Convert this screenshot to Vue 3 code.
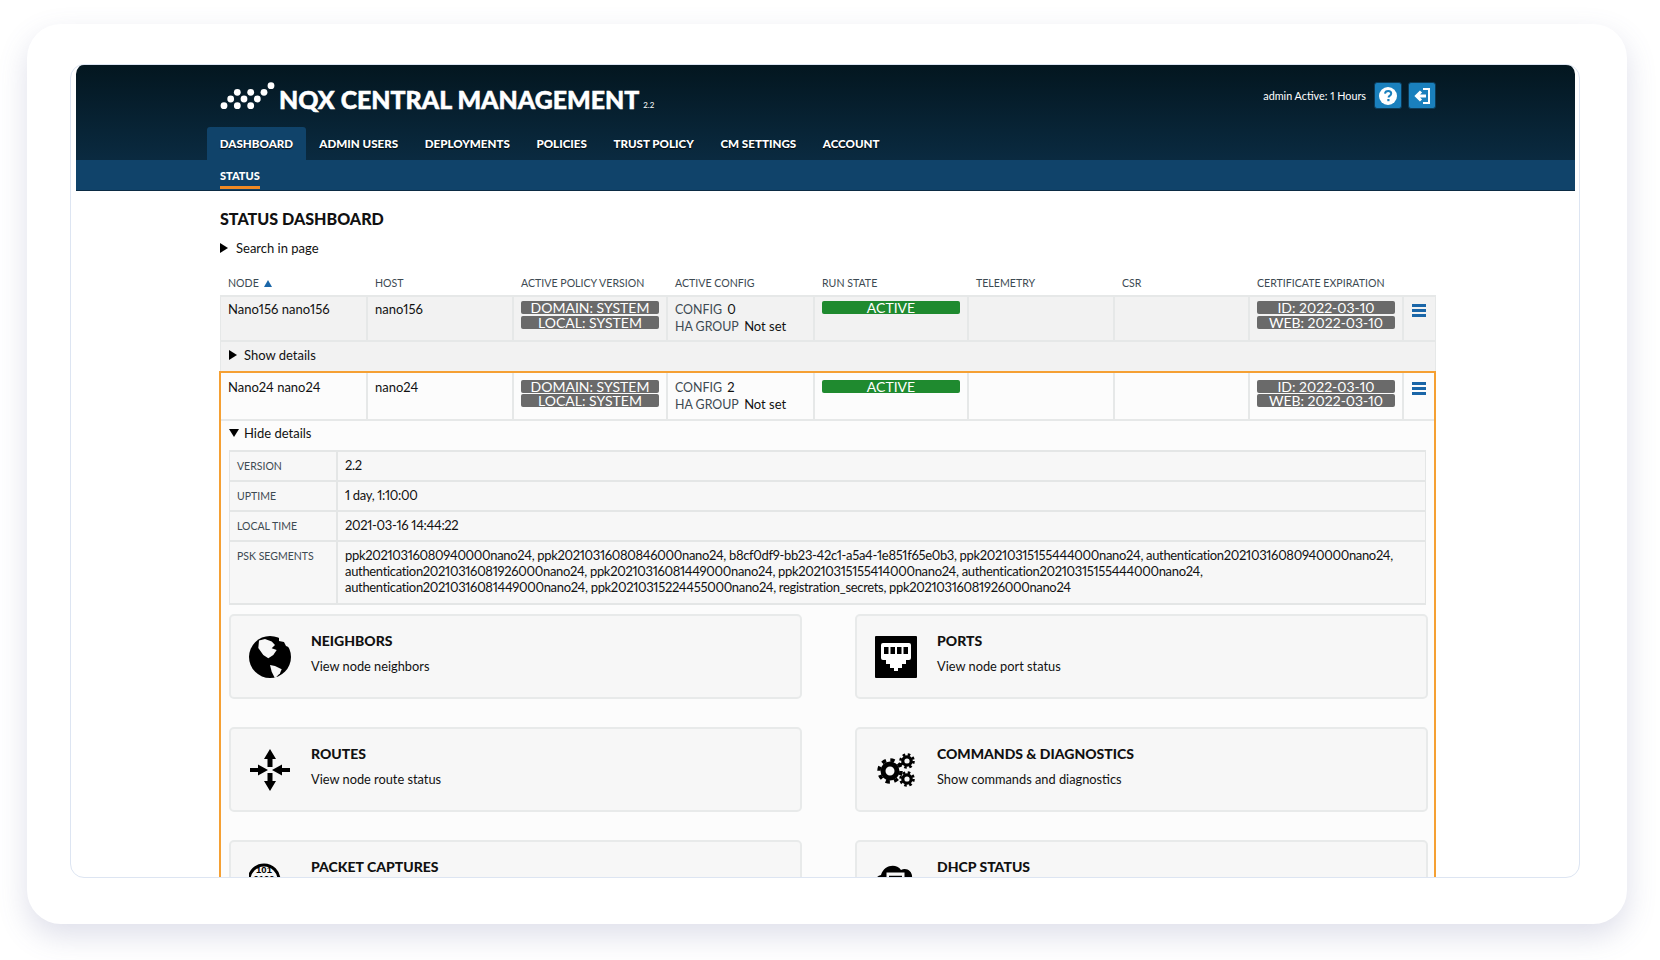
<template>
  <div class="page">
    <div class="card">
      <div class="frame">
        <header class="top">
          <div class="top-row">
            <div class="brand">
              <svg class="logo" viewBox="0 0 56 30" width="56" height="30">
                <circle v-for="(d, i) in logoDots" :key="i" :cx="d[0]" :cy="d[1]" r="3.4" fill="#fff" />
              </svg>
              <span class="brand-name">NQX CENTRAL MANAGEMENT</span>
              <span class="brand-version">2.2</span>
            </div>
            <div class="session">
              <span class="session-text">admin Active: 1 Hours</span>
              <button class="square-btn">
                <svg viewBox="0 0 20 20" width="20" height="20">
                  <circle cx="10" cy="10" r="9" fill="#fff" />
                  <path d="M7 7.6c.2-1.7 1.5-2.6 3.2-2.6 1.8 0 3 1 3 2.5 0 1.2-.7 1.8-1.6 2.4-.8.5-1 .9-1 1.7" fill="none" stroke="#1a80bd" stroke-width="2" />
                  <rect x="9.3" y="13" width="2.2" height="2.2" fill="#1a80bd" />
                </svg>
              </button>
              <button class="square-btn">
                <svg viewBox="0 0 20 20" width="20" height="20">
                  <path d="M11 3h6v14h-6" fill="none" stroke="#fff" stroke-width="2" />
                  <path d="M14 10H6M9 5.5 4.500 10 9 14.500" fill="none" stroke="#fff" stroke-width="3" />
                </svg>
              </button>
            </div>
          </div>
          <nav class="tabs">
            <a v-for="t in tabs" :key="t" class="tab" :class="{ active: t === 'DASHBOARD' }">{{ t }}</a>
          </nav>
          <div class="subnav"><span class="subtab">STATUS</span></div>
        </header>

        <main class="content">
          <h1 class="title">STATUS DASHBOARD</h1>
          <div class="toggle search"><i class="tri right"></i>Search in page</div>

          <div class="grid-row head">
            <div v-for="h in headers" :key="h">{{ h }}<i v-if="h === 'NODE'" class="sort"></i></div>
          </div>

          <section v-for="n in nodes" :key="n.host" class="node" :class="{ open: n.open }">
            <div class="grid-row cells">
              <div>{{ n.name }}</div>
              <div>{{ n.host }}</div>
              <div class="badges">
                <span class="badge">DOMAIN: SYSTEM</span>
                <span class="badge">LOCAL: SYSTEM</span>
              </div>
              <div class="config">
                <div><span class="muted">CONFIG</span> {{ n.config }}</div>
                <div><span class="muted">HA GROUP</span> Not set</div>
              </div>
              <div class="badges"><span class="badge green">ACTIVE</span></div>
              <div></div>
              <div></div>
              <div class="badges">
                <span class="badge">ID: 2022-03-10</span>
                <span class="badge">WEB: 2022-03-10</span>
              </div>
              <div class="menu-cell"><i class="burger"></i></div>
            </div>
            <div class="toggle details-toggle">
              <i class="tri" :class="n.open ? 'down' : 'right'"></i>{{ n.open ? 'Hide details' : 'Show details' }}
            </div>

            <div v-if="n.open" class="expanded">
              <div class="facts">
                <div v-for="f in facts" :key="f.label" class="fact">
                  <div class="fact-label">{{ f.label }}</div>
                  <div class="fact-value">
                    <div v-for="l in f.lines" :key="l">{{ l }}</div>
                  </div>
                </div>
              </div>

              <div class="links">
                <div v-for="l in links" :key="l.title" class="link-card">
                  <div class="link-icon">
                    <svg v-if="l.icon === 'globe'" viewBox="0 0 42 42" width="42" height="42">
                      <circle cx="21" cy="21" r="21" fill="#000" />
                      <path d="M10 4.500 16 3l6.700 2.400L26 9l-3.300 3.300L27.700 14l-3.400 5-5 3.300-5-3.300L9.300 12Z" fill="#f7f7f7" />
                      <path d="M21 29l5 1 6.700 3.300-1.700 4-5 5-3.300-6.600Z" fill="#f7f7f7" />
                      <path d="M30 0h12v12l-5-2-2-4-5-1Z" fill="#f7f7f7" />
                    </svg>
                    <svg v-else-if="l.icon === 'port'" viewBox="0 0 42 42" width="42" height="42">
                      <rect width="42" height="42" rx="1" fill="#000" />
                      <path d="M6 9a2 2 0 0 1 2-2h26a2 2 0 0 1 2 2v13a2 2 0 0 1-2 2h-3v4h-4v4h-4v3h-4v-3h-4v-4H11v-4H8a2 2 0 0 1-2-2Z" fill="#fff" />
                      <path d="M9 11h4.500v7H9ZM15.500 11H20v7h-4.500ZM22 11h4.500v7H22ZM28.500 11H33v7h-4.500Z" fill="#000" />
                    </svg>
                    <svg v-else-if="l.icon === 'routes'" viewBox="0 0 40 42" width="40" height="42">
                      <path d="M20 0l6 10h-3.500v8h-5v-8H14ZM20 42l-6-10h3.500v-8h5v8H26ZM0 19h8v-3.500L18 21 8 26.500V23H0ZM40 19h-8v-3.500L22 21l10 5.500V23h8Z" fill="#000" />
                    </svg>
                    <svg v-else-if="l.icon === 'gears'" viewBox="0 0 38 34" width="38" height="34">
                      <g fill="none" stroke="#000">
                        <circle cx="13" cy="18" r="7" stroke-width="5" />
                        <circle cx="13" cy="18" r="11" stroke-width="3.500" stroke-dasharray="4.320 4.320" />
                        <circle cx="30" cy="8" r="4.200" stroke-width="3.200" />
                        <circle cx="30" cy="8" r="6.500" stroke-width="2.600" stroke-dasharray="2.550 2.550" />
                        <circle cx="30" cy="26" r="4.200" stroke-width="3.200" />
                        <circle cx="30" cy="26" r="6.500" stroke-width="2.600" stroke-dasharray="2.550 2.550" />
                      </g>
                    </svg>
                    <svg v-else-if="l.icon === 'binary'" viewBox="0 0 42 42" width="42" height="42">
                      <circle cx="15" cy="18" r="15" fill="#f7f7f7" stroke="#000" stroke-width="3" />
                      <text x="15" y="11" class="bits">101</text>
                      <text x="15" y="20" class="bits">0100</text>
                    </svg>
                    <svg v-else viewBox="0 0 42 42" width="42" height="42">
                      <path d="M5 30a9 9 0 0 1 1-17C9 3 21 1 26 8c6-3 12 2 11 8 5 2 6 10 0 14Z" fill="#000" />
                      <rect x="11" y="10" width="19" height="24" fill="#f7f7f7" stroke="#000" stroke-width="1" />
                      <path d="M14 15h13" stroke="#000" stroke-width="2.500" />
                    </svg>
                  </div>
                  <div class="link-text">
                    <div class="link-title">{{ l.title }}</div>
                    <div v-if="l.desc" class="link-desc">{{ l.desc }}</div>
                  </div>
                </div>
              </div>
            </div>
          </section>
        </main>
      </div>
    </div>
  </div>
</template>

<script setup>
const logoDots = [
  [4, 24.700], [17.300, 24.700], [30.700, 24.700],
  [10.700, 18], [24, 18], [37.300, 18],
  [17.300, 11.300], [30.700, 11.300], [44, 11.300],
  [51, 4.700]
];

const tabs = ['DASHBOARD', 'ADMIN USERS', 'DEPLOYMENTS', 'POLICIES', 'TRUST POLICY', 'CM SETTINGS', 'ACCOUNT'];

const headers = ['NODE', 'HOST', 'ACTIVE POLICY VERSION', 'ACTIVE CONFIG', 'RUN STATE', 'TELEMETRY', 'CSR', 'CERTIFICATE EXPIRATION', ''];

const nodes = [
  { name: 'Nano156 nano156', host: 'nano156', config: 0, open: false },
  { name: 'Nano24 nano24', host: 'nano24', config: 2, open: true }
];

const facts = [
  { label: 'VERSION', lines: ['2.2'] },
  { label: 'UPTIME', lines: ['1 day, 1:10:00'] },
  { label: 'LOCAL TIME', lines: ['2021-03-16 14:44:22'] },
  {
    label: 'PSK SEGMENTS',
    lines: [
      'ppk20210316080940000nano24, ppk20210316080846000nano24, b8cf0df9-bb23-42c1-a5a4-1e851f65e0b3, ppk20210315155444000nano24, authentication20210316080940000nano24,',
      'authentication20210316081926000nano24, ppk20210316081449000nano24, ppk20210315155414000nano24, authentication20210315155444000nano24,',
      'authentication20210316081449000nano24, ppk20210315224455000nano24, registration_secrets, ppk20210316081926000nano24'
    ]
  }
];

// the last two cards run past the bottom of the frame, only their titles show
const links = [
  { title: 'NEIGHBORS', desc: 'View node neighbors', icon: 'globe' },
  { title: 'PORTS', desc: 'View node port status', icon: 'port' },
  { title: 'ROUTES', desc: 'View node route status', icon: 'routes' },
  { title: 'COMMANDS & DIAGNOSTICS', desc: 'Show commands and diagnostics', icon: 'gears' },
  { title: 'PACKET CAPTURES', icon: 'binary' },
  { title: 'DHCP STATUS', icon: 'dhcp' }
];
</script>

<style>
html, body {
  margin: 0;
  background: #fff;
}
</style>

<style scoped>
.page {
  width: 1660px;
  height: 960px;
  box-sizing: border-box;
  padding: 24px 33px 36px 27px;
  font-family: Lato, "Open Sans", sans-serif;
  font-size: 13px;
  font-variant-numeric: proportional-nums;
  color: #111;
  overflow: hidden;
}

.card {
  height: 900px;
  box-sizing: border-box;
  padding: 40px 47px 46px 43px;
  background: #fff;
  border-radius: 34px;
  box-shadow: 0 12px 30px rgba(90, 95, 150, 0.2);
}

.frame {
  height: 814px;
  box-sizing: border-box;
  padding: 0 4px 0 5px;
  border: 1px solid #dde5f2;
  border-radius: 14px;
  overflow: hidden;
}

.top {
  margin-top: -1px;
  background: linear-gradient(#03161f, #0a2a40 95px);
  border-radius: 10px 10px 0 0;
  color: #fff;
}

.top-row {
  height: 63px;
  box-sizing: border-box;
  padding: 18px 139px 0 144px;
  display: flex;
  justify-content: space-between;
}

.brand {
  display: flex;
  align-items: flex-end;
  height: 30px;
}

.logo {
  margin: -1px 3px 1px 0;
}

.brand-name {
  font-size: 24.900px;
  line-height: 30px;
  font-weight: 900;
  white-space: nowrap;
  -webkit-text-stroke: 0.5px #fff;
  position: relative;
  top: 2px;
}

.brand-version {
  margin: 0 0 2px 4px;
  font-size: 8px;
  line-height: 10px;
}

.session {
  display: flex;
  gap: 6px;
  align-items: center;
  height: 27px;
}

.session-text {
  margin-right: 2px;
  font-size: 10.800px;
}

.square-btn {
  width: 28px;
  height: 27px;
  padding: 0;
  display: flex;
  align-items: center;
  justify-content: center;
  background: #1a80bd;
  border: 1px solid #0c3b58;
  border-radius: 3px;
}

.tabs {
  display: flex;
  height: 33px;
  padding-left: 131px;
}

.tab {
  padding: 0 13.300px;
  font-size: 11.600px;
  font-weight: 900;
  line-height: 33px;
  text-shadow: 0 1px 1px #000;
  white-space: nowrap;
}

.tab.active {
  padding: 0 12.800px;
  background: #10436a;
  border-radius: 3px 3px 0 0;
}

.subnav {
  height: 31px;
  box-sizing: border-box;
  padding: 7px 0 0 144px;
  background: #10436a;
  border-bottom: 1px solid #0b2b44;
}

.subtab {
  display: inline-block;
  height: 18px;
  font-size: 11px;
  font-weight: 900;
  line-height: 16px;
  border-bottom: 3px solid #f08a24;
}

.content {
  padding: 0 139px 0 144px;
}

.title {
  margin: 18px 0 0;
  font-size: 16.100px;
  line-height: 20px;
  font-weight: 900;
}

.toggle {
  display: flex;
  align-items: center;
  gap: 7px;
  line-height: 16px;
}

.search {
  margin-top: 11px;
  gap: 8px;
}

.tri {
  display: block;
  width: 0;
  height: 0;
}

.tri.right {
  border-left: 8px solid #000;
  border-top: 5px solid transparent;
  border-bottom: 5px solid transparent;
}

.tri.down {
  margin-right: -2px;
  border-top: 8px solid #000;
  border-left: 5px solid transparent;
  border-right: 5px solid transparent;
}

.grid-row {
  display: grid;
  grid-template-columns: 147px 146px 154px 147px 154px 146px 135px 154px 33px;
}

.head {
  margin-top: 19px;
  height: 20px;
  font-size: 10.600px;
  line-height: 16px;
  color: #3d4a52;
}

.head > div {
  padding-left: 8px;
  white-space: nowrap;
}

.sort {
  display: inline-block;
  margin-left: 5px;
  border-bottom: 7px solid #1a66a8;
  border-left: 4px solid transparent;
  border-right: 4px solid transparent;
}

.node {
  background: #f2f2f2;
  border: solid #e6e8e8;
  border-width: 2px 1px 0;
}

.node.open {
  margin-left: -1px;
  background: #fcfcfc;
  border: 2px solid #f5a033;
  border-bottom: 0;
}

.cells {
  height: 44px;
  margin-top: -1px;
  border-bottom: 2px solid #e6e8e8;
}

.open .cells {
  margin-top: 0;
  height: 46px;
}

.cells > div {
  padding: 5px 7px;
  border-right: 2px solid #e6e8e8;
  line-height: 16px;
}

.open .cells > div {
  padding-top: 6.500px;
}

.cells > div:last-child {
  border-right: 0;
}

.badges {
  display: flex;
  flex-direction: column;
  gap: 1.500px;
}

.cells > .badges {
  padding-top: 5px;
}

.open .cells > .badges {
  padding-top: 7px;
}

.badge {
  height: 13px;
  background: #6a6a6a;
  border-radius: 2px;
  color: #fff;
  font-size: 14px;
  line-height: 13px;
  text-align: center;
  white-space: nowrap;
}

.badge.green {
  background: #1f8a2f;
}

.muted {
  color: #3d4a52;
  margin-right: 2px;
  font-size: 12.400px;
}

.menu-cell {
  display: flex;
}

.burger {
  display: block;
  width: 14px;
  height: 3px;
  margin: 3px 0 0 1px;
  background: #1a66a8;
  box-shadow: 0 5px 0 #1a66a8, 0 10px 0 #1a66a8;
}

.details-toggle {
  height: 28.500px;
  padding: 0 0 3px 8px;
  box-sizing: border-box;
}

.open .details-toggle {
  height: 28.300px;
  padding-bottom: 2.700px;
}

.expanded {
  padding: 0 8px;
}

.facts {
  margin-top: 1px;
  background: #f7f7f7;
  border: 1px solid #e4e6e6;
  border-width: 2px 1px;
}

.fact {
  display: grid;
  grid-template-columns: 108px 1fr;
  border-top: 2px solid #e4e6e6;
}

.fact:first-child {
  border-top: 0;
}

.fact:last-child .fact-value {
  padding-bottom: 8px;
}

.fact-label {
  padding: 7px 7px;
  border-right: 2px solid #e4e6e6;
  font-size: 10.500px;
  line-height: 14px;
  color: #3d4a52;
}

.fact-value {
  padding: 5px 7px 7px;
  line-height: 16px;
  letter-spacing: -0.330px;
  white-space: nowrap;
}

.links {
  display: grid;
  grid-template-columns: 573px 572.500px;
  column-gap: 53px;
  row-gap: 28px;
  margin: 9.500px -2px 0 0;
}

.link-card {
  height: 85px;
  box-sizing: border-box;
  display: flex;
  align-items: center;
  background: #f7f7f7;
  border: 2px solid #e8eaea;
  border-radius: 5px;
}

.link-icon {
  width: 80px;
  flex: none;
  display: flex;
  justify-content: center;
  margin: 1px 1px 0 -1px;
}

.link-text {
  min-height: 46px;
  margin-top: -3px;
}

.link-title {
  font-size: 14px;
  font-weight: 900;
  line-height: 18px;
}

.link-desc {
  margin-top: 8px;
  font-size: 12.800px;
  line-height: 16px;
}

.bits {
  font-family: "Liberation Sans", sans-serif;
  font-size: 9.500px;
  font-weight: 700;
  fill: #000;
  text-anchor: middle;
}
</style>
